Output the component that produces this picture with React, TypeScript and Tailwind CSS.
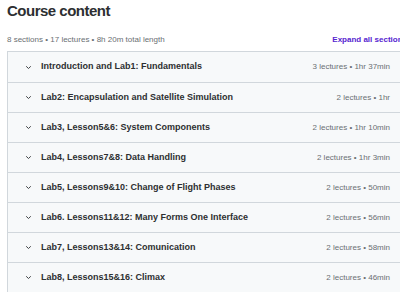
import React from "react";

const sections = [
  ["Introduction and Lab1: Fundamentals", "3 lectures • 1hr 37min"],
  ["Lab2: Encapsulation and Satellite Simulation", "2 lectures • 1hr"],
  ["Lab3, Lesson5&6: System Components", "2 lectures • 1hr 10min"],
  ["Lab4, Lessons7&8: Data Handling", "2 lectures • 1hr 3min"],
  ["Lab5, Lessons9&10: Change of Flight Phases", "2 lectures • 50min"],
  ["Lab6. Lessons11&12: Many Forms One Interface", "2 lectures • 56min"],
  ["Lab7, Lessons13&14: Comunication", "2 lectures • 58min"],
  ["Lab8, Lessons15&16: Climax", "2 lectures • 46min"],
];

function Chevron() {
  return (
    <svg width="7" height="5" viewBox="0 0 7 5" className="shrink-0">
      <path d="M1.2 1.3 L3.5 3.5 L5.8 1.3" fill="none" stroke="#3e4143" strokeWidth="1" />
    </svg>
  );
}

export default function App() {
  return (
    <div className="w-[400px] h-[292px] overflow-hidden bg-white" style={{ fontFamily: '"Liberation Sans", Arial, sans-serif' }}>
      <div className="w-[414px] pl-[7px]">
        <div className="w-[400px]">
          <h2 className="text-[15px] leading-[22px] font-bold text-[#2d2f31] tracking-[-0.5px]">Course content</h2>
          <div className="flex items-center justify-between h-[29px] pt-[7px]">
            <span className="text-[8px] text-[#6a6f73]">8 sections • 17 lectures • 8h 20m total length</span>
            <span className="text-[8px] font-bold text-[#5624d0]">Expand all sections</span>
          </div>
          <div className="border border-[#d1d7dc]">
            {sections.map(([t, m], i) => (
              <div
                key={i}
                className={`flex items-center h-[30px] bg-[#f7f9fa] pl-[17px] pr-[16px] ${i > 0 ? "border-t border-[#d1d7dc]" : ""}`}
              >
                <Chevron />
                <span className="ml-[9px] text-[9px] font-bold text-[#2d2f31] flex-1">{t}</span>
                <span className="text-[8px] text-[#6a6f73]">{m}</span>
              </div>
            ))}
          </div>
        </div>
      </div>
    </div>
  );
}
